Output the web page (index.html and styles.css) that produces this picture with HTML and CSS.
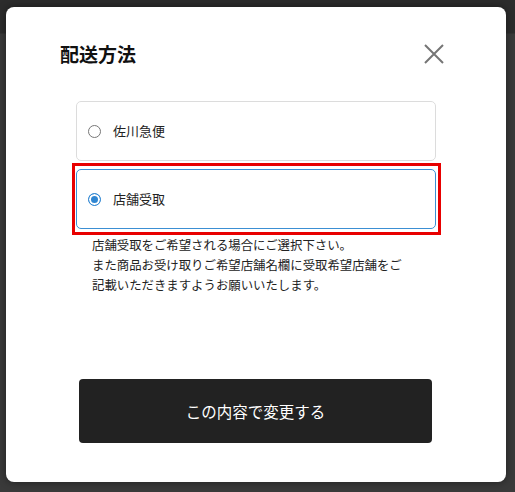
FILE: index.html
```html
<!DOCTYPE html>
<html lang="ja">
<head>
<meta charset="utf-8">
<title>配送方法</title>
<link rel="stylesheet" href="styles.css">
</head>
<body>
<div class="backdrop">
  <div class="modal">
    <div class="modal-header">
      <h2 class="modal-title">配送方法</h2>
      <button class="close-btn" aria-label="閉じる">
        <svg width="20" height="20" viewBox="0 0 20 20"><path d="M1 1L19 19M19 1L1 19" stroke="#757575" stroke-width="2" fill="none"/></svg>
      </button>
    </div>
    <div class="options">
      <label class="option">
        <span class="radio"></span>
        <span class="option-label">佐川急便</span>
      </label>
      <label class="option option-selected">
        <span class="radio radio-checked"></span>
        <span class="option-label">店舗受取</span>
        <span class="highlight"></span>
      </label>
    </div>
    <p class="note">店舗受取をご希望される場合にご選択下さい。<br>また商品お受け取りご希望店舗名欄に受取希望店舗をご<br>記載いただきますようお願いいたします。</p>
    <div class="actions">
      <button class="submit-btn">この内容で変更する</button>
    </div>
  </div>
</div>
</body>
</html>
```
FILE: styles.css
```css
html, body {
  margin: 0;
  padding: 0;
}
body {
  background: #3a3a3a;
  font-family: "Noto Sans CJK JP", "Noto Sans", sans-serif;
  color: #222;
}
.backdrop {
  width: 515px;
  height: 492px;
  padding-top: 7px;
  padding-left: 6px;
  box-sizing: border-box;
  background: linear-gradient(#2c2c2c 0, #2c2c2c 33px, #3a3a3a 34px);
}
.modal {
  width: 500px;
  height: 475px;
  background: #fff;
  border-radius: 8px;
  box-shadow: 0 0 8px rgba(0, 0, 0, 0.45);
  box-sizing: border-box;
  overflow: hidden;
}
.modal-header {
  display: flex;
  justify-content: space-between;
  align-items: center;
  padding: 35px 62px 0 54px;
}
.modal-title {
  margin: 0;
  font-size: 19px;
  line-height: 24px;
  font-weight: 700;
  color: #111;
}
.close-btn {
  width: 20px;
  height: 20px;
  padding: 0;
  border: 0;
  background: none;
  display: block;
}
.close-btn svg {
  display: block;
}
.options {
  margin: 35px 70px 0 70px;
  display: flex;
  flex-direction: column;
  gap: 8px;
}
.option {
  position: relative;
  height: 60px;
  box-sizing: border-box;
  border: 1px solid #dcdcdc;
  border-radius: 5px;
  display: flex;
  align-items: center;
  padding-left: 11px;
  gap: 12px;
}
.option-selected {
  border-color: #3b8fd3;
}
.radio {
  width: 13px;
  height: 13px;
  box-sizing: border-box;
  border: 1px solid #777;
  border-radius: 50%;
  background: #fff;
}
.radio-checked {
  border: 1.5px solid #2f86d2;
  background: #2f86d2;
  box-shadow: inset 0 0 0 2px #fff;
}
.option-label {
  font-size: 13px;
  line-height: 16px;
  color: #222;
}
.highlight {
  position: absolute;
  top: -7px;
  left: -5px;
  right: -6px;
  bottom: -7px;
  border: 3px solid #e80000;
  pointer-events: none;
}
.note {
  margin: 6px 0 0 86px;
  font-size: 12.4px;
  line-height: 20px;
  color: #222;
  white-space: nowrap;
}
.actions {
  margin: 84px 74px 0 73px;
}
.submit-btn {
  width: 100%;
  height: 64px;
  border: 0;
  border-radius: 4px;
  background: #222;
  color: #fff;
  font-family: "Noto Sans CJK JP", "Noto Sans", sans-serif;
  font-size: 15.5px;
  display: block;
}
```
